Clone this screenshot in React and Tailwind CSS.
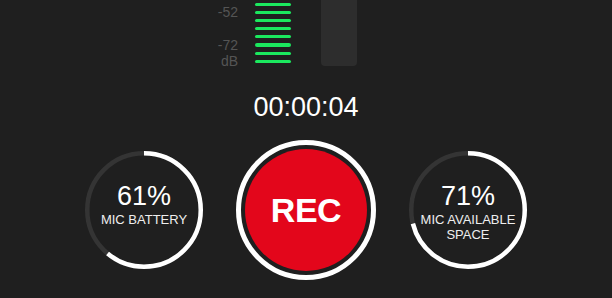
import React from "react";

const bars = [
  { label: "" },
  { label: "-52" },
  { label: "" },
  { label: "" },
  { label: "" },
  { label: "-72" },
  { label: "" },
  { label: "dB" },
];

function Ring({ pct, children }) {
  const size = 118;
  const sw = 4.5;
  const r = (size - sw) / 2;
  const c = 2 * Math.PI * r;
  return (
    <div className="relative w-[118px] h-[118px] shrink-0">
      <svg width={size} height={size} className="absolute inset-0 -rotate-90">
        <circle cx={size / 2} cy={size / 2} r={r} fill="none" stroke="#343434" strokeWidth={sw} />
        <circle
          cx={size / 2}
          cy={size / 2}
          r={r}
          fill="none"
          stroke="#ffffff"
          strokeWidth={sw}
          strokeDasharray={`${(c * pct) / 100} ${c}`}
        />
      </svg>
      <div className="relative flex flex-col items-center pt-[29.5px] text-white">
        <div className="text-[27px] leading-[30px]">{pct}%</div>
        <div className="mt-[1px] text-[13px] leading-[15px] text-center text-[#eeeeee]">{children}</div>
      </div>
    </div>
  );
}

export default function App() {
  return (
    <div
      className="w-[612px] h-[298px] bg-[#1f1f1f] overflow-hidden flex flex-col"
      style={{ fontFamily: '"Liberation Sans", Arial, sans-serif' }}
    >
      <div className="flex flex-row items-start pl-[198px] h-[66px]">
        <div className="flex flex-col">
          {bars.map((b, i) => (
            <div key={i} className="flex flex-row items-center h-[8.2px]">
              <div className="w-[40px] text-right text-[14px] leading-none text-[#555555]">{b.label}</div>
              <div className="ml-[17px] w-[36px] h-[3.2px] rounded-full bg-[#1be85e]" />
            </div>
          ))}
        </div>
        <div className="ml-[30px] w-[36px] h-[66px] rounded-b-[4px] bg-[#2d2d2d]" />
      </div>
      <div className="mt-[26px] text-center text-white text-[27px] leading-[30px]">00:00:04</div>
      <div className="mt-[18px] flex flex-row items-center justify-center gap-[33px]">
        <Ring pct={61}>MIC BATTERY</Ring>
        <div className="w-[140px] h-[140px] shrink-0 rounded-full border-[5px] border-white p-[4px]">
          <div className="w-full h-full rounded-full bg-[#e3061b] flex items-center justify-center">
            <span className="text-white font-bold text-[34px] leading-none tracking-[-0.5px]">REC</span>
          </div>
        </div>
        <Ring pct={71}>
          MIC AVAILABLE
          <br />
          SPACE
        </Ring>
      </div>
    </div>
  );
}
